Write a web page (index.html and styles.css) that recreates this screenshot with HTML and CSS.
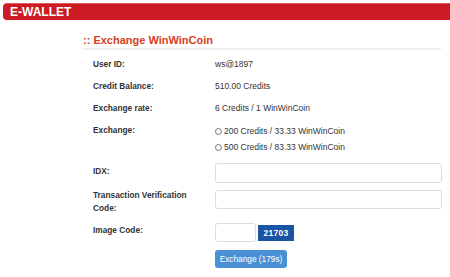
FILE: index.html
```html
<!DOCTYPE html>
<html>

<head>
    <title>E-Wallet</title>
    <meta name="viewport" content="width=device-width, initial-scale=1.0">
    <link rel="stylesheet" href="styles.css">
</head>

<body>
    <div class="top-bar">E-WALLET</div>

    <div class="panel">
        <div class="panel-title">:: Exchange WinWinCoin</div>

        <form class="exchange-form">
            <div class="row">
                <div class="label">User ID:</div>
                <div class="value">ws@1897</div>
            </div>
            <div class="row">
                <div class="label">Credit Balance:</div>
                <div class="value">510.00 Credits</div>
            </div>
            <div class="row">
                <div class="label">Exchange rate:</div>
                <div class="value">6 Credits / 1 WinWinCoin</div>
            </div>
            <div class="row row-radios">
                <div class="label">Exchange:</div>
                <div class="value">
                    <label class="radio"><input type="radio" name="amount">200 Credits / 33.33 WinWinCoin</label>
                    <label class="radio"><input type="radio" name="amount">500 Credits / 83.33 WinWinCoin</label>
                </div>
            </div>
            <div class="row row-idx">
                <div class="label">IDX:</div>
                <div class="value"><input type="text" class="text-input"></div>
            </div>
            <div class="row row-verify">
                <div class="label">Transaction Verification Code:</div>
                <div class="value"><input type="text" class="text-input"></div>
            </div>
            <div class="row row-code">
                <div class="label">Image Code:</div>
                <div class="value code-line">
                    <input type="text" class="text-input code-input">
                    <span class="captcha">21703</span>
                </div>
            </div>
            <div class="row row-button">
                <div class="label"></div>
                <div class="value"><button type="button" class="submit-button">Exchange (179s)</button></div>
            </div>
        </form>
    </div>
</body>

</html>
```

FILE: styles.css
```css
:root {
    --red: #cc1b22;
    --title-color: #d8401f;
    --text-color: #333333;
    --border-color: #dcdcdc;
    --captcha-bg: #1a54a4;
    --button-bg: #4a90d6;
}

body {
    margin: 0;
    font-family: 'Liberation Sans', Arial, sans-serif;
    font-size: 8.5px;
    color: var(--text-color);
    background: #ffffff;
}

.top-bar {
    margin: 3px 0 0 3px;
    height: 17px;
    line-height: 16px;
    padding-left: 7px;
    background: var(--red);
    border-top: 1px solid #e2575d;
    border-radius: 4px 0 0 4px;
    color: #ffffff;
    font-size: 12px;
    font-weight: bold;
    box-sizing: border-box;
}

.panel {
    margin: 13px 0 0 83px;
    width: 358px;
}

.panel-title {
    font-size: 11px;
    font-weight: bold;
    color: var(--title-color);
    line-height: 14px;
    padding-bottom: 1px;
    border-bottom: 2px solid #eeeeee;
}

.exchange-form {
    padding: 3px 0 0 10px;
}

.row {
    display: grid;
    grid-template-columns: 122px 1fr;
    align-items: center;
    height: 22px;
}

.label {
    font-weight: bold;
    font-size: 8.3px;
}

.value {
    font-size: 8.5px;
}

/* rows with inputs grow with their content */
.row-radios,
.row-idx,
.row-verify,
.row-code,
.row-button {
    height: auto;
    align-items: start;
}

.row-radios {
    padding-top: 4px;
}

.row-radios .label {
    line-height: 15px;
}

.radio {
    display: block;
    line-height: 16px;
}

.radio input {
    appearance: none;
    width: 7px;
    height: 7px;
    margin: 0 2px 0 0;
    border: 1px solid #777777;
    border-radius: 50%;
    vertical-align: -1px;
}

.text-input {
    display: block;
    width: 227px;
    height: 20px;
    border: 1px solid var(--border-color);
    border-radius: 3px;
    box-sizing: border-box;
    padding: 0 5px;
}

.row-idx {
    padding-top: 8px;
}

.row-idx .label {
    line-height: 16px;
}

.row-verify {
    padding-top: 7px;
}

.row-verify .text-input {
    height: 19px;
}

.row-verify .label {
    line-height: 12.5px;
    margin-top: -1px;
    width: 110px;
}

.row-code {
    padding-top: 9px;
}

.row-code .label {
    line-height: 14px;
}

.code-line {
    display: flex;
    align-items: center;
    gap: 2px;
}

.code-input {
    width: 41px;
    height: 19px;
}

.captcha {
    background: var(--captcha-bg);
    color: #ffffff;
    font-weight: bold;
    font-size: 8.5px;
    letter-spacing: 0.3px;
    width: 36px;
    height: 16px;
    line-height: 16px;
    text-align: center;
}

.row-button {
    padding-top: 8px;
}

.submit-button {
    display: block;
    background: var(--button-bg);
    color: #ffffff;
    border: none;
    border-radius: 3px;
    font-family: 'Liberation Sans', Arial, sans-serif;
    font-size: 8.3px;
    width: 72px;
    height: 18px;
    padding: 0;
    cursor: pointer;
}
```
